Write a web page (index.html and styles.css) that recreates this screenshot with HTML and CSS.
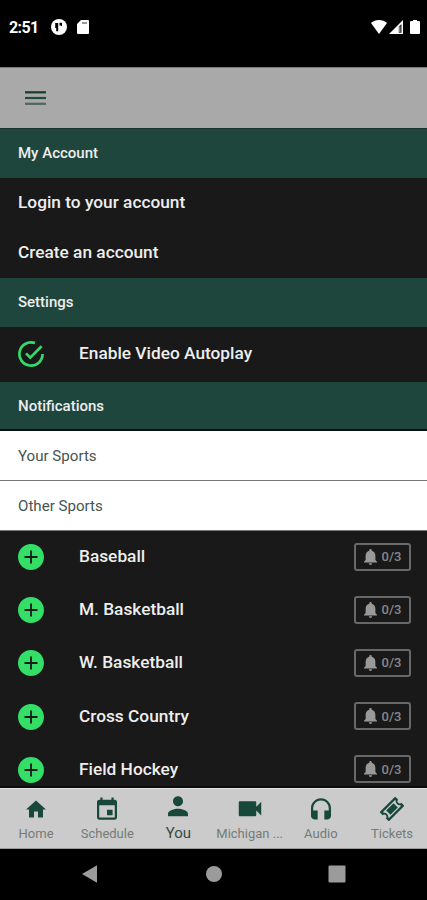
FILE: index.html
```html
<!DOCTYPE html>
<html lang="en">
<head>
<meta charset="utf-8">
<title>You</title>
<link rel="stylesheet" href="styles.css">
</head>
<body>
<svg class="defs" width="0" height="0">
  <symbol id="plus" viewBox="2 2 20 20"><path d="M12 2C6.48 2 2 6.48 2 12s4.480 10 10 10 10-4.480 10-10S17.520 2 12 2zm5 10.700h-4.300V17h-1.400v-4.300H7v-1.400h4.300V7h1.400v4.300H17v1.400z"/></symbol>
  <symbol id="bell" viewBox="4 2.500 16 19.500"><path d="M12 22c1.100 0 2-.9 2-2h-4c0 1.100.9 2 2 2zm6-6v-5c0-3.070-1.640-5.640-4.500-6.320V4c0-.83-.67-1.500-1.500-1.500s-1.500.67-1.500 1.500v.68C7.630 5.360 6 7.920 6 11v5l-2 2v1h16v-1l-2-2z"/></symbol>
</svg>
<div class="phone">
  <div class="status">
    <span class="time">2:51</span>
    <svg class="app" viewBox="0 0 16 16"><circle cx="8" cy="8" r="8" fill="#fff"/><path d="M4.200 4h3v8.200h-2V9h-1zM8.500 3.700H11v3.600L9.500 6.500H8.500z" fill="#000"/></svg>
    <svg class="sd" viewBox="0 0 12 14"><path d="M4 0h7a1 1 0 0 1 1 1v12a1 1 0 0 1-1 1H1a1 1 0 0 1-1-1V4z" fill="#fff"/><path d="M5 2h5v2H5z" fill="#999"/></svg>
    <span class="spacer"></span>
    <svg class="wifi" viewBox="0 0 16 14"><path d="M0 3C4-1 12-1 16 3L8 14z" fill="#fff"/></svg>
    <svg class="signal" viewBox="0 0 14 14"><path d="M0 14L14 0v14z" fill="#fff"/><path d="M9.800 6.500L12.500 4v8.800H9.800z" fill="#222"/><path d="M10.800 6.500v5.500" stroke="#aaa"/></svg>
    <svg class="battery" viewBox="0 0 10 14"><path d="M3 0h4v1h2a1 1 0 0 1 1 1V13a1 1 0 0 1-1 1H1a1 1 0 0 1-1-1V2a1 1 0 0 1 1-1h2z" fill="#fff"/></svg>
  </div>
  <header class="topbar"><svg viewBox="0 0 21 15"><path d="M0 1.300h21" stroke="#173c25"/><path d="M0 7h21" stroke="#214b40"/><path d="M0 12.800h21" stroke="#52645f"/></svg></header>
  <main class="content">
    <h2 class="section">My Account</h2>
    <div class="row link"><span>Login to your account</span></div>
    <div class="row link"><span>Create an account</span></div>
    <h2 class="section">Settings</h2>
    <div class="row autoplay">
      <svg class="check" viewBox="0 0 26 26"><path d="M17 2.100A11.600 11.600 0 1 0 24.600 13M8 12.400l4.300 4.200L23.600 5.300"/></svg>
      <span>Enable Video Autoplay</span>
    </div>
    <h2 class="section notifications">Notifications</h2>
    <h3 class="sub">Your Sports</h3>
    <h3 class="sub">Other Sports</h3>
    <div class="sports">
      <div class="row sport"><svg class="add"><use href="#plus"/></svg><span>Baseball</span><div class="count"><svg><use href="#bell"/></svg>0/3</div></div>
      <div class="row sport"><svg class="add"><use href="#plus"/></svg><span>M. Basketball</span><div class="count"><svg><use href="#bell"/></svg>0/3</div></div>
      <div class="row sport"><svg class="add"><use href="#plus"/></svg><span>W. Basketball</span><div class="count"><svg><use href="#bell"/></svg>0/3</div></div>
      <div class="row sport"><svg class="add"><use href="#plus"/></svg><span>Cross Country</span><div class="count"><svg><use href="#bell"/></svg>0/3</div></div>
      <div class="row sport"><svg class="add"><use href="#plus"/></svg><span>Field Hockey</span><div class="count"><svg><use href="#bell"/></svg>0/3</div></div>
    </div>
  </main>
  <nav class="tabs">
    <a class="tab"><svg viewBox="0 0 24 24"><path d="M10 20.500v-6h4v6h5v-8h3l-10-9-10 9h3v8z"/></svg><span>Home</span></a>
    <a class="tab"><svg viewBox="1.200 .6 21.600 21.600"><path d="M17 12h-5v5h5v-5zM16 1v2H8V1H6v2H5c-1.110 0-1.990.9-1.990 2L3 19c0 1.100.89 2 2 2h14c1.100 0 2-.9 2-2V5c0-1.100-.9-2-2-2h-1V1h-2zm3 18H5V8h14v11z"/></svg><span>Schedule</span></a>
    <a class="tab active"><svg viewBox="2.400 3 19.200 19.200"><path d="M12 12c2.210 0 4-1.790 4-4s-1.790-4-4-4-4 1.790-4 4 1.790 4 4 4zm0 2c-2.670 0-8 1.340-8 4v2h16v-2c0-2.660-5.330-4-8-4z"/></svg><span>You</span></a>
    <a class="tab"><svg viewBox="2.400 2.700 19.200 19.200"><path d="M17 10.500V7c0-.55-.45-1-1-1H4c-.55 0-1 .45-1 1v10c0 .55.450 1 1 1h12c.55 0 1-.45 1-1v-3.500l4 4v-11l-4 4z"/></svg><span>Michigan ...</span></a>
    <a class="tab"><svg viewBox="1.200 -.2 21.600 21.600"><path d="M12 1c-4.970 0-9 4.030-9 9v7c0 1.660 1.340 3 3 3h3v-8H5v-2c0-3.870 3.130-7 7-7s7 3.130 7 7v2h-4v8h3c1.660 0 3-1.340 3-3v-7c0-4.970-4.030-9-9-9z"/></svg><span>Audio</span></a>
    <a class="tab"><svg viewBox="0 0 24 24"><g transform="rotate(-45 12 12)"><path fill-rule="evenodd" d="M1 5.500h22v4.300a2.200 2.200 0 0 0 0 4.400v4.300H1v-4.300a2.200 2.200 0 0 0 0-4.400zM3.500 7.800v1a4 4 0 0 1 0 6.400v1h17v-1a4 4 0 0 1 0-6.400v-1zM6.800 9h10.400v6H6.800z"/></g></svg><span>Tickets</span></a>
  </nav>
  <div class="system">
    <svg viewBox="0 0 18 18"><path d="M1 9L16 .2v17.600z"/></svg>
    <svg viewBox="0 0 18 18"><circle cx="9" cy="9" r="8"/></svg>
    <svg viewBox="0 0 18 18"><rect x=".5" y=".5" width="17" height="17" rx="1"/></svg>
  </div>
</div>
</body>
</html>
```
FILE: styles.css
```css
* { box-sizing: border-box; }
body { margin: 0; background: #000; font-family: Roboto, sans-serif; }
svg { display: block; flex: none; }
.defs { position: absolute; }
.phone { width: 427px; height: 900px; display: flex; flex-direction: column; overflow: hidden; }
.status { height: 67px; flex: none; display: flex; align-items: flex-start; padding: 20px 7px 0 9px; color: #fff; }
.time { width: 42px; font-size: 16px; line-height: 16px; font-weight: 700; letter-spacing: -.6px; }
.app { width: 16px; height: 16px; margin-top: -1px; }
.sd { width: 12px; height: 14px; margin-left: 10px; }
.spacer { flex: 1; }
.wifi { width: 16px; height: 14px; }
.signal { width: 14px; height: 14px; margin: 0 7px 0 2px; }
.battery { width: 10px; height: 14px; }
.topbar { height: 62px; flex: none; padding: 23px 25px 0; background: #a9a9a9; border-top: 1px solid #777; border-bottom: 1px solid #173329; }
.topbar svg { width: 21px; height: 15px; stroke-width: 2.200; }
.content { height: 659px; flex: none; overflow: hidden; background: #191919; border-bottom: 2px solid #0c0c0c; }
.section { height: 49px; margin: 0; padding: 0 18px; background: #1f463c; color: #eee; font-size: 15px; line-height: 49px; font-weight: 500; }
.row { display: flex; align-items: center; padding: 0 16px 0 18px; color: #eee; font-size: 17.300px; font-weight: 500; }
.link { height: 50px; padding-bottom: 2px; }
.autoplay { height: 55px; padding-bottom: 1px; }
.autoplay span, .sport span { padding-bottom: 2px; }
.check { width: 26px; height: 26px; margin-right: 35px; fill: none; stroke: #35d968; stroke-width: 2.700; }
.notifications { height: 49px; border-bottom: 2px solid #07140f; }
.sub { height: 50px; margin: 0; padding: 0 18px; background: #fff; border-bottom: 1px solid #777; color: #46544f; font-size: 15.100px; line-height: 50px; font-weight: 400; }
.sport { height: 53.200px; padding-bottom: 1px; }
.add { width: 26px; height: 26px; margin-right: 35px; fill: #34df67; }
.count { width: 57px; height: 28px; margin-left: auto; margin-bottom: 1px; display: flex; align-items: center; justify-content: center; gap: 5px; border: 2px solid #686868; border-radius: 3px; color: #888; font-size: 13px; font-weight: 500; }
.count svg { width: 13px; height: 16px; fill: #999; }
.tabs { height: 61px; flex: none; display: grid; grid-template-columns: repeat(6, 71.200px); background: #cbcbcb; border-top: 1px solid #e2e2e2; border-bottom: 1px solid #9b9b9b; }
.tab { display: flex; flex-direction: column; align-items: center; padding: 8px 0 0 1px; color: #747b78; font-size: 13px; line-height: 18px; white-space: nowrap; }
.tab svg { width: 24px; height: 24px; margin-bottom: 4px; fill: #18483a; }
.tab.active { padding-top: 6px; color: #334a42; font-size: 15px; }
.tab.active svg { margin-bottom: 5px; }
.system { height: 51px; flex: none; display: flex; justify-content: space-between; padding: 16px 81px; background: #000; }
.system svg { width: 18px; height: 18px; fill: #9b9b9b; }
```
